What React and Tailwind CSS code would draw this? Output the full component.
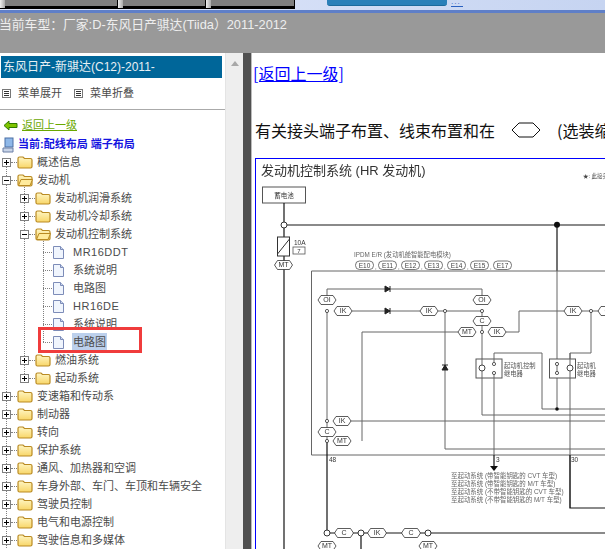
const cjk = { fontFamily: '"Liberation Sans","Noto Sans CJK SC",sans-serif' };

function Plus({ open }) {
  return (
    <svg width="9" height="9" viewBox="0 0 9 9" className="shrink-0">
      <rect x="0.5" y="0.5" width="8" height="8" fill="#fff" stroke="#808080" />
      <path d={open ? "M2 4.5H7" : "M2 4.5H7M4.5 2V7"} stroke="#000" />
    </svg>
  );
}
function Folder({ open }) {
  return (
    <svg width="16" height="14" viewBox="0 0 16 14" className="shrink-0">
      <path d="M1 3.5Q1 2 2.5 2H6L7.5 3.5H13.5Q15 3.5 15 5V11.5Q15 13 13.5 13H2.5Q1 13 1 11.5Z" fill="url(#fg)" stroke="#b98a22" strokeWidth="1.2" />
      {open && <path d="M1.5 12.5L4 6.5H15.5L13 12.5Z" fill="#ffeb9c" stroke="#b98a22" />}
    </svg>
  );
}
function Doc() {
  return (
    <svg width="12" height="13" viewBox="0 0 12 13" className="shrink-0">
      <path d="M.5 .5H7.5L10.5 3.5V12.5H.5Z" fill="#f0f5fd" stroke="#7d8cb8" />
      <path d="M7.5 .5V3.5H10.5" fill="#c9d6ee" stroke="#7d8cb8" />
    </svg>
  );
}
function Row({ depth = 0, kind, label, open, sel }) {
  const latin = /^[A-Z]/.test(label);
  return (
    <div className="relative flex items-center h-[18px] whitespace-nowrap text-[11px] leading-[18px] text-[#4b4b4b]" style={{ paddingLeft: depth === 0 ? 2 : depth === 1 ? 20 : 43 }}>
      {kind === "doc" ? (
        <>
          <span className="w-[9px] border-t border-dotted border-[#808080] shrink-0" />
          <span className="ml-[1px]"><Doc /></span>
          <span className="ml-[7px] px-[1px]" style={{ ...(sel ? { background: "#bcd0ec" } : {}), ...(latin ? { letterSpacing: "0.5px" } : {}) }}>{label}</span>
        </>
      ) : (
        <>
          <Plus open={open} />
          <span className="w-[6px] border-t border-dotted border-[#808080] shrink-0" />
          <Folder open={open} />
          <span className="ml-[4px]">{label}</span>
        </>
      )}
    </div>
  );
}

function Hex({ x, y, t, w = 18, h = 9 }) {
  const a = w / 2, b = h / 2, c = a - 3;
  return (
    <g>
      <path d={`M${x - a} ${y}L${x - c} ${y - b}H${x + c}L${x + a} ${y}L${x + c} ${y + b}H${x - c}Z`} fill="#fff" stroke="#333" strokeWidth="0.8" />
      <text x={x} y={y + 2.4} fontSize="7" textAnchor="middle" fill="#333">{t}</text>
    </g>
  );
}
function Node({ x, y, r = 1.6 }) {
  return <circle cx={x} cy={y} r={r} fill="#fff" stroke="#333" strokeWidth="0.8" />;
}
function Diode({ x, y, up }) {
  return up ? (
    <path d={`M${x - 3} ${y + 2}H${x + 3}L${x} ${y - 3}ZM${x - 3} ${y - 3}H${x + 3}`} fill="#222" stroke="#222" />
  ) : (
    <path d={`M${x - 2} ${y - 3}V${y + 3}L${x + 3} ${y}ZM${x + 3} ${y - 3}V${y + 3}`} fill="#222" stroke="#222" />
  );
}

function Diagram() {
  const gray = { stroke: "#666", strokeWidth: 1, fill: "none" };
  const blk = { stroke: "#111", strokeWidth: 1.2, fill: "none" };
  return (
    <svg width="349" height="390" viewBox="256 159 349 390" className="block" style={cjk}>
      <defs><filter id="b" x="-5%" y="-5%" width="110%" height="110%"><feGaussianBlur stdDeviation="0.3" /></filter></defs>
      <g filter="url(#b)">
        <text x="261" y="175" fontSize="13" fill="#333">发动机控制系统 (HR 发动机)</text>
        <text x="583" y="178" fontSize="5.5" fill="#444">★: 此接头</text>
        <rect x="262.5" y="187" width="43" height="16" fill="#fff" stroke="#555" />
        <text x="284" y="198" fontSize="6.5" textAnchor="middle" fill="#333">蓄电池</text>
        <path d="M284 203V549" {...blk} />
        <path d="M284 225H605" {...blk} />
        <path d="M557 225V271" {...blk} />
        <circle cx="284" cy="225" r="3" fill="#fff" stroke="#333" />
        <circle cx="557" cy="224.7" r="3" fill="#111" />
        <rect x="277.5" y="237" width="12" height="19" fill="#fff" stroke="#333" />
        <path d="M277.5 254L289.5 239" stroke="#333" />
        <text x="294" y="245" fontSize="6.5" fill="#333">10A</text>
        <rect x="293" y="247" width="12" height="7" fill="#fff" stroke="#555" strokeWidth="0.8" />
        <text x="299" y="253" fontSize="6" textAnchor="middle" fill="#333">7</text>
        <Hex x={283.5} y={265} t="MT" />
        <text x="354" y="257" fontSize="6.3" fill="#666">IPDM E/R (发动机舱智能配电模块)</text>
        {["E10", "E11", "E12", "E13", "E14", "E15", "E17"].map((t, i) => (
          <g key={t}>
            <rect x={355.5 + i * 23} y="261" width="18" height="8.5" rx="4" fill="#fff" stroke="#555" strokeWidth="0.8" />
            <text x={364.5 + i * 23} y="267.5" fontSize="6.5" textAnchor="middle" fill="#444">{t}</text>
            {i < 6 && <text x={375 + i * 23} y="269" fontSize="6" fill="#444">,</text>}
          </g>
        ))}
        <path d="M605 271H311.5V455H605" {...gray} />
        <path d="M557 271V409" {...gray} />
        <path d="M327 300V289H482V300" {...gray} />
        <path d="M327 311V441M352 311H420M438 311H482M482 311V332M445 311V449H605M362 441V332H458M482 332V415H605" {...gray} />
        <path d="M506 332H519V311H564M582 311H605M591 311V353H570V508" {...gray} />
        <path d="M494 353H542V409H605M351 421H605" {...gray} />
        <path d="M570 455V508H605" {...blk} />
        <path d="M327 441V533M494 455V466M361 533V549M328 533H605" {...blk} />
        <path d="M490 466H498L494 471Z" fill="#111" />
        <Diode x={387} y={289} />
        <Diode x={387} y={311} />
        <Diode x={445} y={368} up />
        <Hex x={327} y={300} t="OI" />
        <Hex x={482} y={300} t="OI" />
        <Hex x={343} y={311} t="IK" />
        <Hex x={429} y={311} t="IK" />
        <Hex x={482} y={321} t="C" />
        <Hex x={467} y={332} t="MT" />
        <Hex x={497} y={332} t="IK" />
        <Hex x={573} y={311} t="IK" />
        <Hex x={607} y={311} t="C" />
        <Node x={327} y={311} /><Node x={445} y={311} /><Node x={482} y={311} /><Node x={482} y={332} /><Node x={591} y={311} />
        <Node x={327} y={421} /><Node x={327} y={441} />
        <Hex x={342} y={421} t="IK" />
        <Hex x={327} y={432} t="C" />
        <Hex x={342} y={441} t="MT" />
        <rect x="476" y="359" width="26" height="19" fill="#fff" stroke="#555" />
        <rect x="549.5" y="359" width="26" height="19" fill="#fff" stroke="#555" />
        <path d="M482 359V378M494 353V362M494 374V455M570 353V378M557 362V374" {...gray} />
        <circle cx="482" cy="368" r="3" fill="#fff" stroke="#444" />
        <circle cx="570" cy="368" r="3" fill="#fff" stroke="#444" />
        <Node x={494} y={364} /><Node x={494} y={373} /><Node x={557} y={364} /><Node x={557} y={373} />
        <circle cx="557" cy="409" r="1.8" fill="#111" />
        <text x="504" y="368" fontSize="6.3" fill="#555">起动机控制</text>
        <text x="504" y="376" fontSize="6.3" fill="#555">继电器</text>
        <text x="577" y="368" fontSize="6.3" fill="#555">起动机</text>
        <text x="577" y="376" fontSize="6.3" fill="#555">继电器</text>
        <text x="329" y="462" fontSize="6.5" fill="#333">48</text>
        <text x="496" y="462" fontSize="6.5" fill="#333">3</text>
        <text x="571" y="462" fontSize="6.5" fill="#333">30</text>
        {["至起动系统 (带智能钥匙的 CVT 车型)", "至起动系统 (带智能钥匙的 M/T 车型)", "至起动系统 (不带智能钥匙的 CVT 车型)", "至起动系统 (不带智能钥匙的 M/T 车型)"].map((t, i) => (
          <text key={t} x="451" y={478 + i * 8} fontSize="6.45" fill="#666">{t}</text>
        ))}
        <circle cx="327" cy="533" r="3" fill="#fff" stroke="#333" />
        <Hex x={344} y={533} t="C" w={19} />
        <circle cx="361" cy="533" r="3" fill="#fff" stroke="#333" />
        <Hex x={377} y={533} t="IK" w={19} />
        <Hex x={411} y={533} t="C" w={19} />
        <circle cx="428" cy="533" r="3" fill="#fff" stroke="#333" />
        <Hex x={327} y={546} t="MT" />
        <Hex x={428} y={546} t="MT" />
      </g>
    </svg>
  );
}

function Menu() {
  return (
    <svg width="9" height="9" viewBox="0 0 9 9" className="shrink-0"><rect x=".5" y=".5" width="8" height="8" fill="#fff" stroke="#777" /><path d="M2 2.5H7M2 4.5H7M2 6.5H7" stroke="#333" /></svg>
  );
}

function Tab({ w }) {
  return (
    <div className="flex shrink-0">
      <div className="w-[5px] bg-gradient-to-r from-[#f0f0f0] to-[#aaa] border-b border-black" />
      <div className="bg-[#7f7f7f] border-b-[3px] border-r border-black" style={{ width: w }} />
    </div>
  );
}

export default function App() {
  return (
    <div className="w-[605px] h-[549px] overflow-hidden flex flex-col bg-white" style={cjk}>
      <svg width="0" height="0" className="absolute"><defs><linearGradient id="fg" x1="0" y1="0" x2="0" y2="1"><stop offset="0" stopColor="#fff6c4" /><stop offset="1" stopColor="#f8d668" /></linearGradient></defs></svg>
      <div className="h-[10px] flex bg-gradient-to-r from-[#e2e9fb] to-[#c6d4f1] shrink-0 overflow-hidden">
        <div className="flex h-[9px] mb-[1px]">
          <Tab w={113} />
          <Tab w={83} />
          <Tab w={84} />
        </div>
        <div className="ml-[32px] w-[120px] h-[6px] rounded-b-[3px] bg-[#2a80b9] border-b border-[#1c6a9c]" />
        <div className="ml-[4px] w-[12px] h-[7px] border-b border-[#2a60c0] text-[8px] leading-[4px] text-[#2a60c0] tracking-[1px]">...</div>
      </div>
      <div className="h-[3px] bg-[#5f7fc8] shrink-0" />
      <div className="h-[40px] bg-[#999] text-[#eee] text-[12.8px] pt-[2px] -indent-[1px] whitespace-nowrap shrink-0">当前车型：厂家:D-东风日产骐达(Tiida）2011-2012</div>
      <div className="flex flex-1 min-h-0">
        <div className="w-[225px] shrink-0 flex flex-col overflow-hidden">
          <div className="h-[22px] mt-[3px] ml-[1px] mr-[3px] bg-[#006699] text-[#e8f0f4] text-[12px] flex items-center pl-[2px] shrink-0">东风日产-新骐达(C12)-2011-</div>
          <div className="h-[32px] flex items-center text-[11px] text-[#4b4b4b] border-b border-[#aaa] shrink-0">
            <span className="flex items-center w-[74px] pl-[2px] shrink-0"><Menu /><span className="ml-[7px]">菜单展开</span></span>
            <span className="flex items-center"><Menu /><span className="ml-[7px]">菜单折叠</span></span>
          </div>
          <div className="flex items-center h-[26px] pl-[3px] pt-[4px] text-[11px] shrink-0">
            <svg width="15" height="11" viewBox="0 0 15 11"><path d="M1 5.5L6 1V3.5H14V7.5H6V10Z" fill="#7fc400" stroke="#2f7a00" /></svg>
            <span className="ml-[4px] text-[#6aa800] underline">返回上一级</span>
          </div>
          <div className="flex items-center h-[17px] pl-[2px] text-[11px] font-bold text-[#1414e0] shrink-0">
            <svg width="13" height="16" viewBox="0 0 13 16"><rect x="3" y="1" width="8" height="9" fill="#8fb8e8" stroke="#4a6fa5" /><path d="M1 11H11V15H1Z" fill="#c8d4e8" stroke="#6a7fa5" /></svg>
            <span className="ml-[3px]">当前:配线布局 端子布局</span>
          </div>
          <div className="relative">
            <div className="absolute left-[6px] top-[9px] h-[400px] border-l border-dotted border-[#808080]" />
            <div className="absolute left-[24px] top-[27px] h-[198px] border-l border-dotted border-[#808080]" />
            <div className="absolute left-[43px] top-[81px] h-[108px] border-l border-dotted border-[#808080]" />
            <Row kind="f" label="概述信息" />
            <Row kind="f" label="发动机" open />
            <Row depth={1} kind="f" label="发动机润滑系统" />
            <Row depth={1} kind="f" label="发动机冷却系统" />
            <Row depth={1} kind="f" label="发动机控制系统" open />
            <Row depth={2} kind="doc" label="MR16DDT" />
            <Row depth={2} kind="doc" label="系统说明" />
            <Row depth={2} kind="doc" label="电路图" />
            <Row depth={2} kind="doc" label="HR16DE" />
            <div className="relative">
              <Row depth={2} kind="doc" label="系统说明" />
              <div className="absolute left-[38px] top-[12px] w-[104px] h-[26px] border-[3px] border-[#f03c3c] z-10" />
            </div>
            <Row depth={2} kind="doc" label="电路图" sel />
            <Row depth={1} kind="f" label="燃油系统" />
            <Row depth={1} kind="f" label="起动系统" />
            <Row kind="f" label="变速箱和传动系" />
            <Row kind="f" label="制动器" />
            <Row kind="f" label="转向" />
            <Row kind="f" label="保护系统" />
            <Row kind="f" label="通风、加热器和空调" />
            <Row kind="f" label="车身外部、车门、车顶和车辆安全" />
            <Row kind="f" label="驾驶员控制" />
            <Row kind="f" label="电气和电源控制" />
            <Row kind="f" label="驾驶信息和多媒体" />
          </div>
        </div>
        <div className="w-[18px] shrink-0 bg-[#eee] border-l border-[#e4e4e4] flex justify-center pt-[8px]">
          <svg width="8" height="5" viewBox="0 0 8 5"><path d="M0 5L4 0L8 5Z" fill="#a8a8a8" /></svg>
        </div>
        <div className="w-[8px] shrink-0 bg-[#505050]" />
        <div className="flex-1 min-w-0 overflow-hidden border-l border-[#bbb] pl-[1px]">
          <div className="pt-[10px] text-[16px] leading-[20px] whitespace-nowrap" style={{ fontFamily: '"Noto Sans CJK SC",sans-serif' }}>
            <a className="text-[#0000ff] underline">[返回上一级]</a>
          </div>
          <div className="mt-[36px] ml-[2px] h-[22px] flex items-center text-[16px] whitespace-nowrap text-[#111]" style={{ fontFamily: '"Noto Sans CJK SC",sans-serif' }}>
            <span>有关接头端子布置、线束布置和在</span>
            <svg width="30" height="16" viewBox="0 0 30 16" className="ml-[16px] shrink-0"><path d="M1 8L8 1H22L29 8L22 15H8Z" fill="none" stroke="#111" /></svg>
            <span className="ml-[16px]">(选装缩</span>
          </div>
          <div className="mt-[17px] ml-[2px] border-t border-l border-[#0000ff] w-[400px]"><Diagram /></div>
        </div>
      </div>
    </div>
  );
}
